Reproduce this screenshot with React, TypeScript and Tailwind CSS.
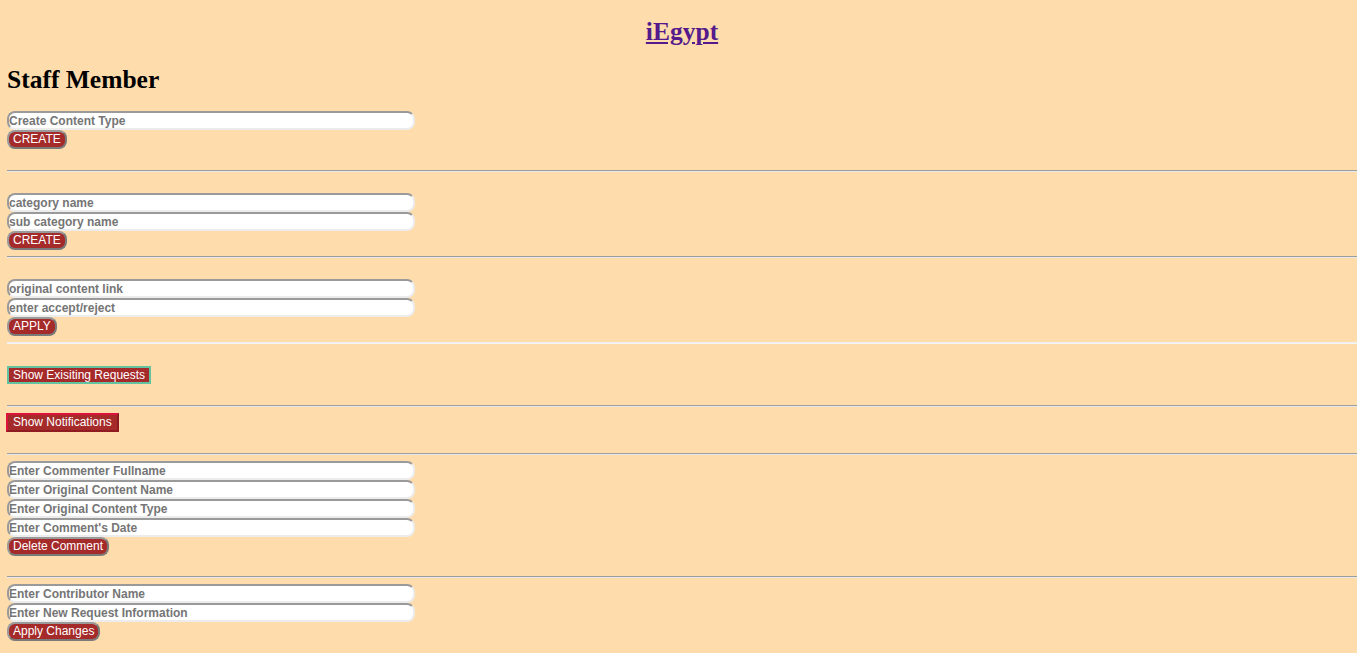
import React from "react";

const inputCls =
  "block w-[408px] h-[19px] rounded-[8px] border-2 border-t-[#9a9a9a] border-l-[#9a9a9a] border-b-[#ececec] border-r-[#ececec] bg-white px-0 text-[12px] font-bold leading-[15px] text-[#757575] placeholder:text-[#757575] outline-none";
const btnCls =
  "block h-[19px] rounded-[8px] border-2 border-t-[#9a9a9a] border-l-[#9a9a9a] border-b-[#7a7a7a] border-r-[#7a7a7a] bg-[#a52a2a] px-[4px] text-[12px] leading-[13px] text-white";

function Inp({ ph }: { ph: string }) {
  return <input className={inputCls} placeholder={ph} />;
}

function Hr({ light, mt }: { light?: boolean; mt: string }) {
  return (
    <div
      className={
        "h-[2px] w-full border-t " +
        (light ? "border-[#efefef] bg-[#f4f4f4] " : "border-[#9d9d9d] bg-[#e8e8e8] ") +
        mt
      }
    />
  );
}

export default function App() {
  return (
    <div className="min-h-[653px] w-full bg-[#fedcab] pl-[7px] pb-[12px] font-['Liberation_Sans',Arial,sans-serif]">
      <div className="pt-[14px] text-center font-['Liberation_Serif',serif] text-[25.5px] font-bold leading-[36px]">
        <a href="#" className="text-[#551a8b] underline">
          iEgypt
        </a>
      </div>
      <h2 className="mt-[15px] font-['Liberation_Serif',serif] text-[25.5px] font-bold leading-[30px] text-black">
        Staff Member
      </h2>

      <div className="mt-[16px]">
        <Inp ph="Create Content Type" />
        <button className={btnCls + " mt-0"}>CREATE</button>
      </div>
      <Hr mt="mt-[21px]" />

      <div className="mt-[21px]">
        <Inp ph="category name" />
        <Inp ph="sub category name" />
        <button className={btnCls}>CREATE</button>
      </div>
      <Hr mt="mt-[6px]" />

      <div className="mt-[21px]">
        <Inp ph="original content link" />
        <Inp ph="enter accept/reject" />
        <button className={btnCls}>APPLY</button>
      </div>
      <Hr light mt="mt-[6px]" />

      <button className="mt-[22px] block h-[18px] border-2 border-[#63c29f] bg-[#a52a2a] px-[4px] text-[12px] leading-[12px] text-white">
        Show Exisiting Requests
      </button>
      <Hr mt="mt-[21px]" />

      <button className="-ml-[1px] mt-[6px] block h-[19px] border-2 border-t-[#dc143c] border-l-[#dc143c] border-b-[#8e1a22] border-r-[#8e1a22] bg-[#a52a2a] px-[5px] text-[12px] leading-[13px] text-white">
        Show Notifications
      </button>
      <Hr mt="mt-[21px]" />

      <div className="mt-[6px]">
        <Inp ph="Enter Commenter Fullname" />
        <Inp ph="Enter Original Content Name" />
        <Inp ph="Enter Original Content Type" />
        <Inp ph="Enter Comment's Date" />
        <button className={btnCls}>Delete Comment</button>
      </div>
      <Hr mt="mt-[20px]" />

      <div className="mt-[6px]">
        <Inp ph="Enter Contributor Name" />
        <Inp ph="Enter New Request Information" />
        <button className={btnCls}>Apply Changes</button>
      </div>
    </div>
  );
}
